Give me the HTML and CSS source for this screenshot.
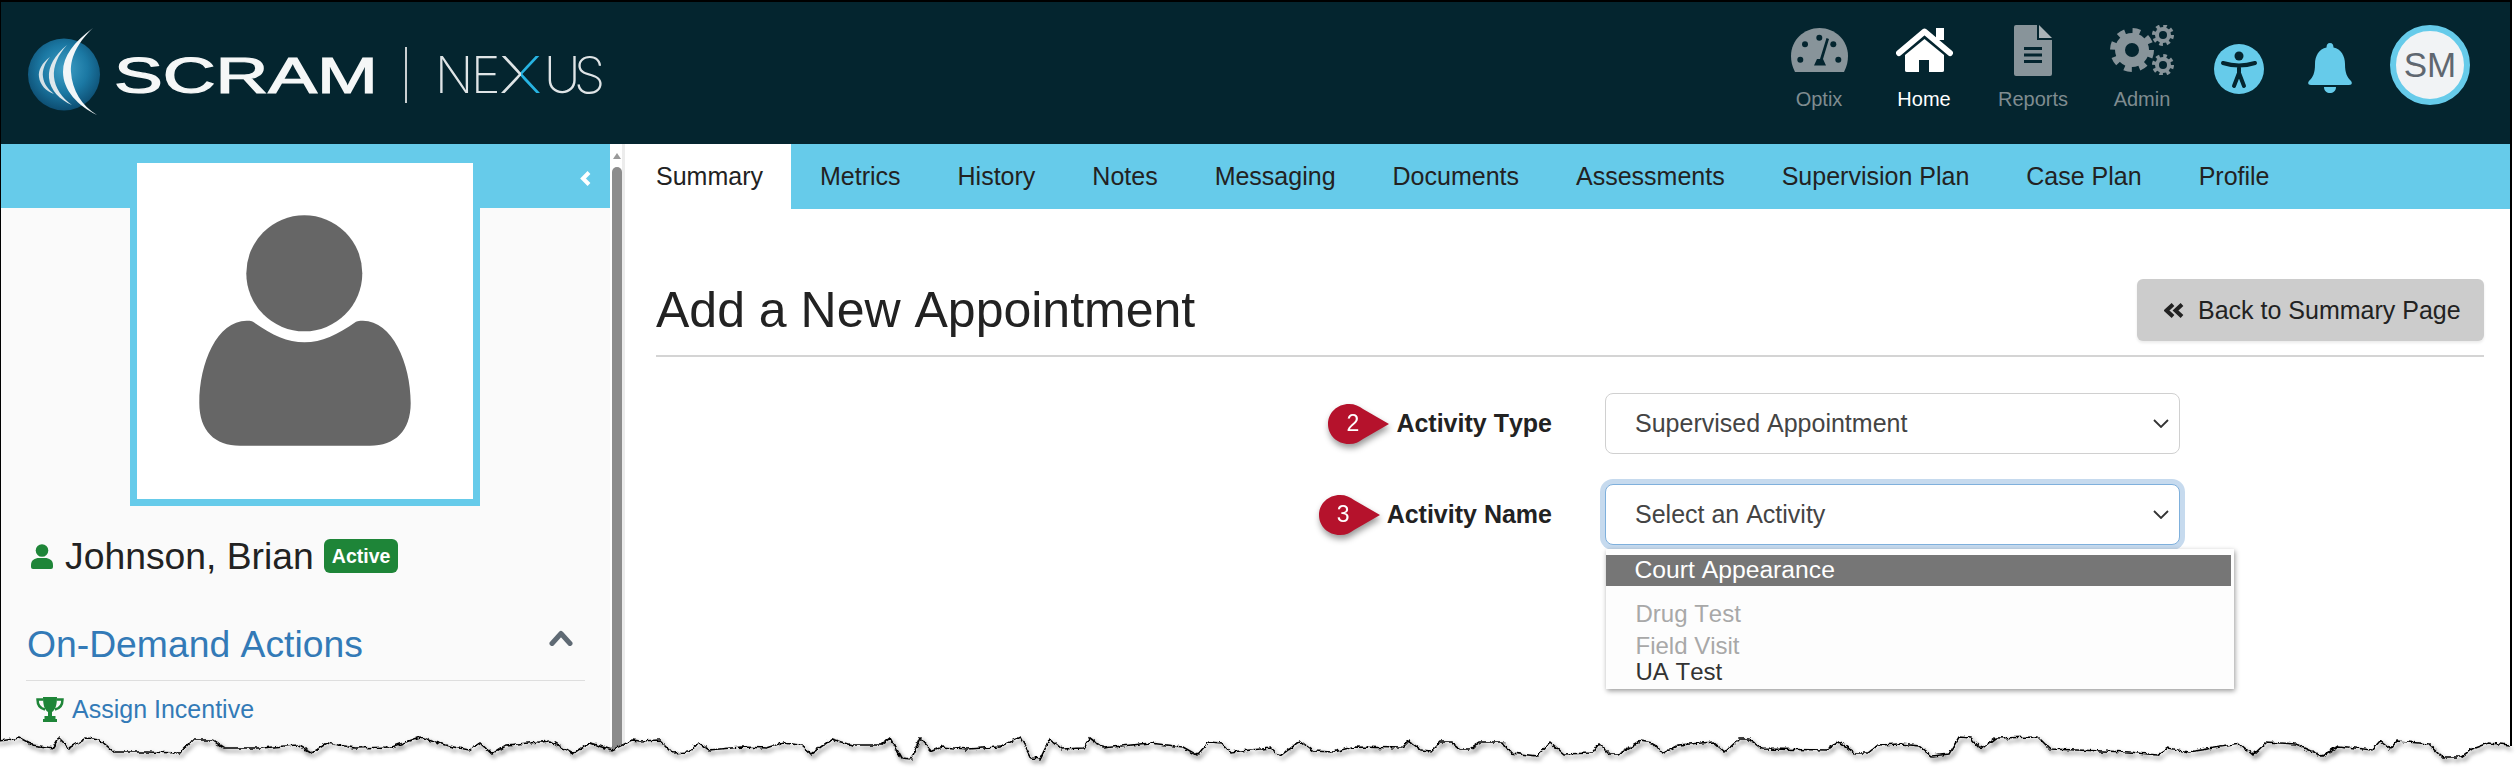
FILE: index.html
```html
<!DOCTYPE html>
<html lang="en">
<head>
<meta charset="utf-8">
<title>SCRAM Nexus - Add a New Appointment</title>
<link rel="stylesheet" href="styles.css">
</head>
<body>
<div class="app">
  <header class="header">
    <svg class="logo" width="620" height="142" viewBox="1 2 620 142" aria-label="SCRAM Nexus">
      <defs>
        <radialGradient id="globe" cx="0.5" cy="0.42" r="0.6">
          <stop offset="0" stop-color="#3f9fc6"/>
          <stop offset="0.55" stop-color="#1b78a3"/>
          <stop offset="1" stop-color="#0c4a6e"/>
        </radialGradient>
        <linearGradient id="nexusFill" gradientUnits="userSpaceOnUse" x1="439" y1="0" x2="603" y2="0">
          <stop offset="0.5" stop-color="#dfe4e6"/>
          <stop offset="0.5" stop-color="#27b4e2"/>
          <stop offset="0.64" stop-color="#27b4e2"/>
          <stop offset="0.64" stop-color="#dfe4e6"/>
        </linearGradient>
      </defs>
      <circle cx="64" cy="74.5" r="36" fill="url(#globe)"/>
      <path d="M93 28 C74 42 63 56 63 72 C63 90 78 106 97 115 C82 106 72 90 71 72 C70 56 80 40 93 28Z" fill="#f2f6f8"/>
      <path d="M67 45 C55 55 48 66 49 78 C50 90 60 100 72 105 C62 98 55 88 54 77 C53 66 58 55 67 45Z" fill="#dfe8ec"/>
      <path d="M50 57 C42 63 38 70 39 77 C40 85 46 91 54 94 C48 89 44 84 43 77 C42 70 45 63 50 57Z" fill="#d5e1e6"/>
      <text class="logo-scram" x="114" y="93" textLength="264" lengthAdjust="spacingAndGlyphs">SCRAM</text>
      <rect x="405" y="47" width="2" height="56" fill="#c9cfd1"/>
      <text class="logo-nexus" y="93" fill="url(#nexusFill)"><tspan x="435 471">NE</tspan><tspan x="499" textLength="43" lengthAdjust="spacingAndGlyphs">X</tspan><tspan x="544 574">US</tspan></text>
    </svg>
    <nav class="topnav">
      <a class="nav-item">
        <span class="nav-icon">
          <svg width="57" height="44" viewBox="0 0 57 44"><path class="ico-grey" d="M4 44C1 38 0 33 0 28 0 12 13 0 28.500 0 44 0 57 12 57 28 57 33 56 38 53 44Z"/><g class="ico-dark"><circle cx="14" cy="16.300" r="3"/><circle cx="28.300" cy="9.700" r="3"/><circle cx="42.300" cy="16.300" r="3"/><circle cx="9.300" cy="31.700" r="3"/><circle cx="47.300" cy="31.700" r="3"/><path d="M35.500 10 38 11 32 31 35 37.500H23L26 31H29Z"/></g></svg>
        </span>
        <span class="nav-label">Optix</span>
      </a>
      <a class="nav-item nav-item--active">
        <span class="nav-icon">
          <svg width="57" height="44" viewBox="0 0 57 44"><path class="ico-white" d="M40 0H48V12H40Z"/><path class="ico-roof" d="M3 25 28.500 3.500 54 25"/><path class="ico-white" d="M28.500 11 48 27V42.500Q48 44 46 44H33V32H23V44H11Q9 44 9 42.500V27Z"/></svg>
        </span>
        <span class="nav-label">Home</span>
      </a>
      <a class="nav-item nav-item--wide">
        <span class="nav-icon">
          <svg width="38" height="51" viewBox="0 0 38 51"><path class="ico-grey" d="M2 0H23V15H38V49Q38 51 36 51H2Q0 51 0 49V2Q0 0 2 0Z"/><path class="ico-fold" d="M25 0 38 13H25Z"/><g class="ico-dark"><rect x="10" y="22" width="18" height="3"/><rect x="10" y="28.500" width="18" height="3"/><rect x="10" y="35" width="18" height="3"/></g></svg>
        </span>
        <span class="nav-label">Reports</span>
      </a>
      <a class="nav-item">
        <span class="nav-icon">
          <svg width="64" height="50" viewBox="0 0 64 50"><g class="ico-grey"><circle cx="22" cy="25" r="17"/><circle class="gear-teeth" cx="22" cy="25" r="19" stroke-width="6" stroke-dasharray="7.460 7.460"/><circle cx="53" cy="10" r="8"/><circle class="gear-teeth" cx="53" cy="10" r="9" stroke-width="4" stroke-dasharray="3.530 3.530"/><circle cx="53" cy="40" r="8"/><circle class="gear-teeth" cx="53" cy="40" r="9" stroke-width="4" stroke-dasharray="3.530 3.530"/></g><g class="ico-dark"><circle cx="22" cy="25" r="7"/><circle cx="53" cy="10" r="4"/><circle cx="53" cy="40" r="4"/></g></svg>
        </span>
        <span class="nav-label">Admin</span>
      </a>
      <svg class="a11y" width="50" height="50" viewBox="0 0 50 50"><circle class="ico-blue" cx="25" cy="25" r="25"/><circle class="ico-dark" cx="25" cy="12" r="4.500"/><path class="a11y-figure" d="M9 19Q25 24 41 19M25 22V30M25 29 20 42M25 29 30 42"/></svg>
      <svg class="bell" width="44" height="50" viewBox="0 0 44 50"><path class="ico-blue" d="M22 0C24.500 0 25.500 2 25.500 4.500 33 6 37 13 37 21 37 30 39 34 43 38 44.500 40 44 42 41 42H3C0 42-.5 40 1 38 5 34 7 30 7 21 7 13 11 6 18.500 4.500 18.500 2 19.500 0 22 0ZM16 44H28C28 48 25 50 22 50 19 50 16 48 16 44Z"/></svg>
      <div class="avatar">SM</div>
    </nav>
  </header>

  <div class="body">
    <aside class="sidebar">
      <div class="side-pane">
        <svg class="collapse" width="11" height="15" viewBox="0 0 11 15"><path d="M9 1.500 3 7.500 9 13.500"/></svg>
        <div class="photo">
          <svg width="336" height="336" viewBox="0 0 336 336"><circle cx="167.300" cy="110.300" r="58" fill="#666"/><path fill="#666" d="M116 158.700C135 172 150 179.300 167.500 179.300 185 179.300 200 172 219 158.700 222 157.500 224 157.700 226 157.700 255 157.700 273.700 200 273.700 240 273.700 268 258 282.700 233 282.700H103C78 282.700 62.300 268 62.300 240 62.300 200 80 157.700 109.700 157.700 112 157.700 114 157.500 116 158.700Z"/></svg>
        </div>
        <div class="person">
          <svg width="22" height="25" viewBox="0 0 22 25"><circle class="ico-green" cx="11" cy="6.500" r="6.300"/><path class="ico-green" d="M0 23V21C0 16 4 14 8 14H14C18 14 22 16 22 21V23Q22 25 20 25H2Q0 25 0 23Z"/></svg>
          <span class="person-name">Johnson, Brian</span>
          <span class="badge">Active</span>
        </div>
        <div class="section-head">
          <span class="section-title">On-Demand Actions</span>
          <svg class="section-chevron" width="24" height="16" viewBox="0 0 24 16"><path d="M3 13.500 12 3.500 21 13.500"/></svg>
        </div>
        <a class="action">
          <svg width="28" height="25" viewBox="0 0 28 25"><path class="ico-green" d="M7 0H21C21 9 19 13 16 15V19H19.500V22H21V25H7V22H8.500V19H12V15C9 13 7 9 7 0Z"/><path class="trophy-handle" d="M7 2.500H1.500C1.500 8 4 11.500 9 12.500M21 2.500H26.500C26.500 8 24 11.500 19 12.500"/></svg>
          <span>Assign Incentive</span>
        </a>
      </div>
      <div class="scrollbar">
        <span class="scroll-arrow"></span>
        <span class="scroll-thumb"></span>
      </div>
    </aside>

    <main class="main">
      <div class="tabs">
        <a class="tab tab--active">Summary</a>
        <a class="tab">Metrics</a>
        <a class="tab">History</a>
        <a class="tab">Notes</a>
        <a class="tab">Messaging</a>
        <a class="tab">Documents</a>
        <a class="tab">Assessments</a>
        <a class="tab">Supervision Plan</a>
        <a class="tab">Case Plan</a>
        <a class="tab">Profile</a>
      </div>
      <div class="content">
        <div class="title-row">
          <h1 class="title">Add a New Appointment</h1>
          <a class="back-btn">
            <svg width="20" height="15" viewBox="0 0 20 15"><path d="M9 1.500 2.500 7.500 9 13.500M18 1.500 11.500 7.500 18 13.500"/></svg>
            <span>Back to Summary Page</span>
          </a>
        </div>
        <form class="form">
          <div class="form-row">
            <label class="form-label">
              <span class="marker"><svg width="62" height="40" viewBox="0 0 62 40"><path d="M21 0C27 0 31 2 35 5L61 20 35 35C31 38 27 40 21 40 9 40 0 31 0 20 0 9 9 0 21 0Z"/></svg><span class="marker-num">2</span></span>
              <span>Activity Type</span>
            </label>
            <div class="select">
              <span>Supervised Appointment</span>
              <svg width="16" height="9" viewBox="0 0 16 9"><path d="M1 1 8 8 15 1"/></svg>
            </div>
          </div>
          <div class="form-row">
            <label class="form-label">
              <span class="marker"><svg width="62" height="40" viewBox="0 0 62 40"><path d="M21 0C27 0 31 2 35 5L61 20 35 35C31 38 27 40 21 40 9 40 0 31 0 20 0 9 9 0 21 0Z"/></svg><span class="marker-num">3</span></span>
              <span>Activity Name</span>
            </label>
            <div class="select select--open">
              <span>Select an Activity</span>
              <svg width="16" height="9" viewBox="0 0 16 9"><path d="M1 1 8 8 15 1"/></svg>
              <ul class="dropdown">
                <li class="option option--selected">Court Appearance</li>
                <li class="option option--disabled option--first">Drug Test</li>
                <li class="option option--disabled">Field Visit</li>
                <li class="option option--last">UA Test</li>
              </ul>
            </div>
          </div>
        </form>
      </div>
    </main>
  </div>
</div>

<svg class="torn" width="2519" height="58" viewBox="0 715 2519 58" aria-hidden="true">
  <defs>
    <filter id="rough" filterUnits="userSpaceOnUse" x="-10" y="715" width="2539" height="58">
      <feTurbulence type="fractalNoise" baseFrequency="0.18" numOctaves="3" seed="4"/>
      <feDisplacementMap in="SourceGraphic" scale="5" xChannelSelector="G" yChannelSelector="R"/>
    </filter>
  </defs>
  <polygon class="torn-fill" points="-20,741 0,741 20,738 33,745 53,748 59,738 69,748 86,738 100,740 114,752 147,752 180,753 192,740 212,740 224,748 261,748 298,745 312,753 327,743 355,748 392,747 420,737 445,745 469,750 480,743 492,754 506,745 551,741 573,754 590,743 612,750 633,740 640,741 660,740 673,753 689,752 698,742 709,750 742,747 767,748 783,743 801,745 811,754 832,739 852,745 881,745 890,738 901,758 911,759 920,738 932,751 942,747 967,749 999,747 1020,737 1031,758 1040,759 1050,739 1062,749 1083,748 1090,738 1103,748 1150,743 1183,747 1197,755 1209,742 1222,743 1230,752 1271,748 1280,756 1300,741 1313,751 1333,752 1353,747 1402,748 1409,741 1421,750 1431,751 1440,742 1451,742 1460,749 1470,749 1480,742 1502,742 1511,753 1537,756 1550,742 1564,754 1592,753 1599,744 1609,754 1619,754 1641,741 1653,743 1662,754 1678,745 1713,742 1725,752 1739,739 1749,739 1762,749 1827,750 1839,742 1855,753 1868,753 1878,745 1900,744 1920,746 1932,756 1949,754 1959,737 1971,738 1981,749 1995,738 2038,737 2050,749 2129,752 2157,755 2168,748 2188,752 2240,744 2253,755 2267,742 2295,744 2322,756 2338,746 2372,750 2380,741 2390,749 2397,741 2429,744 2443,757 2461,757 2472,749 2488,743 2510,745 2540,745 2540,790 -20,790"/>
  <polyline class="torn-line" points="-20,741 0,741 20,738 33,745 53,748 59,738 69,748 86,738 100,740 114,752 147,752 180,753 192,740 212,740 224,748 261,748 298,745 312,753 327,743 355,748 392,747 420,737 445,745 469,750 480,743 492,754 506,745 551,741 573,754 590,743 612,750 633,740 640,741 660,740 673,753 689,752 698,742 709,750 742,747 767,748 783,743 801,745 811,754 832,739 852,745 881,745 890,738 901,758 911,759 920,738 932,751 942,747 967,749 999,747 1020,737 1031,758 1040,759 1050,739 1062,749 1083,748 1090,738 1103,748 1150,743 1183,747 1197,755 1209,742 1222,743 1230,752 1271,748 1280,756 1300,741 1313,751 1333,752 1353,747 1402,748 1409,741 1421,750 1431,751 1440,742 1451,742 1460,749 1470,749 1480,742 1502,742 1511,753 1537,756 1550,742 1564,754 1592,753 1599,744 1609,754 1619,754 1641,741 1653,743 1662,754 1678,745 1713,742 1725,752 1739,739 1749,739 1762,749 1827,750 1839,742 1855,753 1868,753 1878,745 1900,744 1920,746 1932,756 1949,754 1959,737 1971,738 1981,749 1995,738 2038,737 2050,749 2129,752 2157,755 2168,748 2188,752 2240,744 2253,755 2267,742 2295,744 2322,756 2338,746 2372,750 2380,741 2390,749 2397,741 2429,744 2443,757 2461,757 2472,749 2488,743 2510,745"/>
</svg>
</body>
</html>
```

FILE: styles.css
```css
* { box-sizing: border-box; }

html, body {
  margin: 0;
  height: 773px;
  overflow: hidden;
  background: #fff;
}

body {
  position: relative;
  font-family: "Liberation Sans", Arial, sans-serif;
  font-kerning: none;
  color: #222;
}

.app {
  width: 2512px;
  height: 773px;
  display: flex;
  flex-direction: column;
  border-top: 2px solid #000;
  border-left: 1px solid #000;
  border-right: 2px solid #000;
  overflow: hidden;
}

/* Header */
.header {
  flex: 0 0 142px;
  display: flex;
  justify-content: space-between;
  background: #04252f;
}

.logo { display: block; flex: none; }

.logo-scram {
  font-family: "Liberation Sans", Arial, sans-serif;
  font-size: 50px;
  fill: #f5f7f7;
  stroke: #f5f7f7;
  stroke-width: 1.2px;
}

.logo-nexus {
  font-family: "Inter", "Liberation Sans", sans-serif;
  font-size: 50px;
  font-weight: 200;
}

.topnav {
  display: flex;
  align-items: flex-start;
  padding-right: 40px;
}

.nav-item {
  width: 105px;
  padding-top: 22px;
  display: flex;
  flex-direction: column;
  align-items: center;
  color: #7f8c90;
}

.nav-item--wide { width: 113px; }
.nav-item--active { color: #fff; }

.nav-icon {
  height: 52px;
  display: flex;
  align-items: center;
  justify-content: center;
}

.nav-icon svg { display: block; }

.nav-label {
  margin-top: 11px;
  font-size: 20px;
  line-height: 24px;
}

.ico-grey { fill: #88949a; }
.ico-fold { fill: #a9b3b7; }
.ico-dark { fill: #04252f; }
.ico-white { fill: #fff; }
.ico-blue { fill: #66cbea; }
.ico-green { fill: #1e8538; }

.ico-roof {
  fill: none;
  stroke: #fff;
  stroke-width: 6px;
  stroke-linecap: round;
  stroke-linejoin: round;
}

.gear-teeth {
  fill: none;
  stroke: #88949a;
}

.a11y-figure {
  fill: none;
  stroke: #04252f;
  stroke-width: 4px;
  stroke-linecap: round;
}

.a11y { margin: 42px 0 0 19.500px; flex: none; }
.bell { margin: 41px 0 0 44px; flex: none; }

.avatar {
  width: 80px;
  height: 80px;
  margin: 23px 0 0 38px;
  flex: none;
  display: flex;
  align-items: center;
  justify-content: center;
  border: 6px solid #66cbea;
  border-radius: 50%;
  background: #f1f3f5;
  color: #5f6770;
  font-size: 35px;
}

/* Body */
.body {
  flex: 1;
  min-height: 0;
  display: flex;
}

.sidebar {
  flex: 0 0 624px;
  display: flex;
  background: #fafafa;
}

.side-pane {
  position: relative;
  flex: 0 0 609px;
  padding-top: 12px;
  background: linear-gradient(#66cbea 64px, #fafafa 64px);
}

.collapse {
  position: absolute;
  left: 579px;
  top: 27px;
}

.collapse path {
  fill: none;
  stroke: #fff;
  stroke-width: 4px;
}

.photo {
  width: 350px;
  height: 350px;
  margin-left: 129px;
  border: 7px solid #66cbea;
  background: #fff;
}

.photo svg { display: block; }

.person {
  margin: 29px 0 0 30px;
  display: flex;
  align-items: center;
}

.person svg { flex: none; }

.person-name {
  margin-left: 12px;
  font-size: 37.300px;
  line-height: 42px;
}

.badge {
  margin-left: 10px;
  padding: 0 8px;
  height: 34px;
  display: flex;
  align-items: center;
  border-radius: 6px;
  background: #1e8538;
  color: #fff;
  font-size: 19.500px;
  font-weight: 700;
}

.section-head {
  margin: 46px 25px 0 25px;
  padding: 0 12px 15px 1px;
  display: flex;
  justify-content: space-between;
  align-items: flex-start;
  border-bottom: 1.500px solid #dedede;
}

.section-title {
  font-size: 37.300px;
  line-height: 42px;
  color: #337ab7;
}

.section-chevron { margin-top: 7px; }

.section-chevron path {
  fill: none;
  stroke: #5f6a74;
  stroke-width: 5px;
  stroke-linejoin: round;
  stroke-linecap: round;
}

.action {
  margin: 13px 0 0 35px;
  display: flex;
  align-items: center;
  gap: 8px;
  color: #337ab7;
  font-size: 25px;
  line-height: 30px;
}

.trophy-handle {
  fill: none;
  stroke: #1e8538;
  stroke-width: 2.500px;
}

.scrollbar {
  flex: 0 0 15px;
  display: flex;
  flex-direction: column;
  align-items: flex-start;
  padding: 9px 0 0 2px;
  background: #fff;
  border-right: 3px solid #ececec;
}

.scroll-arrow {
  margin-left: 0.500px;
  width: 0;
  height: 0;
  border-left: 4.500px solid transparent;
  border-right: 4.500px solid transparent;
  border-bottom: 6px solid #9a9a9a;
}

.scroll-thumb {
  margin-top: 8px;
  width: 10px;
  flex: 1;
  border-radius: 5px 5px 0 0;
  background: #8c8c8c;
}

/* Main */
.main {
  flex: 1;
  min-width: 0;
  background: #fff;
}

.tabs {
  height: 65px;
  display: flex;
  background: #66cbea;
}

.tab {
  padding: 0 28.500px;
  font-size: 25px;
  line-height: 65px;
  color: #222;
}

.tab--active {
  padding: 0 28.500px 0 31px;
  background: #fff;
}

.content { padding: 70px 26px 0 31px; }

.title-row {
  height: 78px;
  display: flex;
  justify-content: space-between;
  align-items: flex-start;
  border-bottom: 2px solid #d4d4d4;
}

.title {
  margin: 0;
  font-size: 50px;
  font-weight: 400;
  line-height: 62px;
  color: #222;
}

.back-btn {
  width: 347px;
  height: 62px;
  padding-left: 27px;
  display: flex;
  align-items: center;
  gap: 14px;
  border-radius: 6px;
  background: #ccc;
  box-shadow: 0 2px 3px rgba(0, 0, 0, .08);
  font-size: 25px;
  color: #222;
}

.back-btn path {
  fill: none;
  stroke: #222;
  stroke-width: 4px;
}

.form {
  margin-top: 36px;
  display: flex;
  flex-direction: column;
  gap: 30px;
}

.form-row {
  display: flex;
  align-items: center;
}

.form-label {
  width: 896px;
  display: flex;
  justify-content: flex-end;
  align-items: center;
  gap: 6px;
  font-size: 25px;
  font-weight: 700;
  color: #222;
}

.marker {
  position: relative;
  display: block;
  width: 62px;
  height: 40px;
  filter: drop-shadow(1px 4px 3px rgba(0, 0, 0, .4));
}

.marker svg { display: block; fill: #b5122c; }

.marker-num {
  position: absolute;
  left: 18px;
  top: 7px;
  color: #fff;
  font-size: 23px;
  line-height: 24px;
  font-weight: 400;
}

.select {
  position: relative;
  margin-left: 53px;
  width: 575px;
  height: 61px;
  padding: 0 10px 0 29px;
  display: flex;
  justify-content: space-between;
  align-items: center;
  border: 1.500px solid #d0d0d0;
  border-radius: 8px;
  background: #fff;
  font-size: 25px;
  color: #444;
}

.select svg path {
  fill: none;
  stroke: #333;
  stroke-width: 1.800px;
}

.select--open {
  border-color: #7fb0dc;
  box-shadow: 0 0 0 5px #c6daee;
}

.dropdown {
  position: absolute;
  left: -0.500px;
  top: 63.500px;
  width: 628px;
  height: 140px;
  margin: 0;
  padding: 6px 3px 0 0;
  list-style: none;
  background: #fdfdfd;
  box-shadow: 1px 2px 5px rgba(0, 0, 0, .4);
}

.option {
  padding-left: 30px;
  font-size: 24px;
  line-height: 26px;
  margin-top: 6px;
  color: #333;
}

.option--selected {
  margin-top: 0;
  padding: 0 0 2px 29px;
  font-size: 24.700px;
  line-height: 29px;
  background: #767676;
  color: #fff;
}

.option--first { margin-top: 15px; }
.option--disabled { color: #a8a8a8; }
.option--last { margin-top: 0; }

/* Torn bottom edge of the screenshot */
.torn {
  position: absolute;
  left: 0;
  top: 715px;
  overflow: hidden;
}

.torn-fill {
  fill: #fff;
  filter: url(#rough);
}

.torn-line {
  fill: none;
  stroke: #000;
  stroke-width: 1.600px;
  filter: url(#rough) drop-shadow(2px 3px 2px rgba(0, 0, 0, .65));
}
```
